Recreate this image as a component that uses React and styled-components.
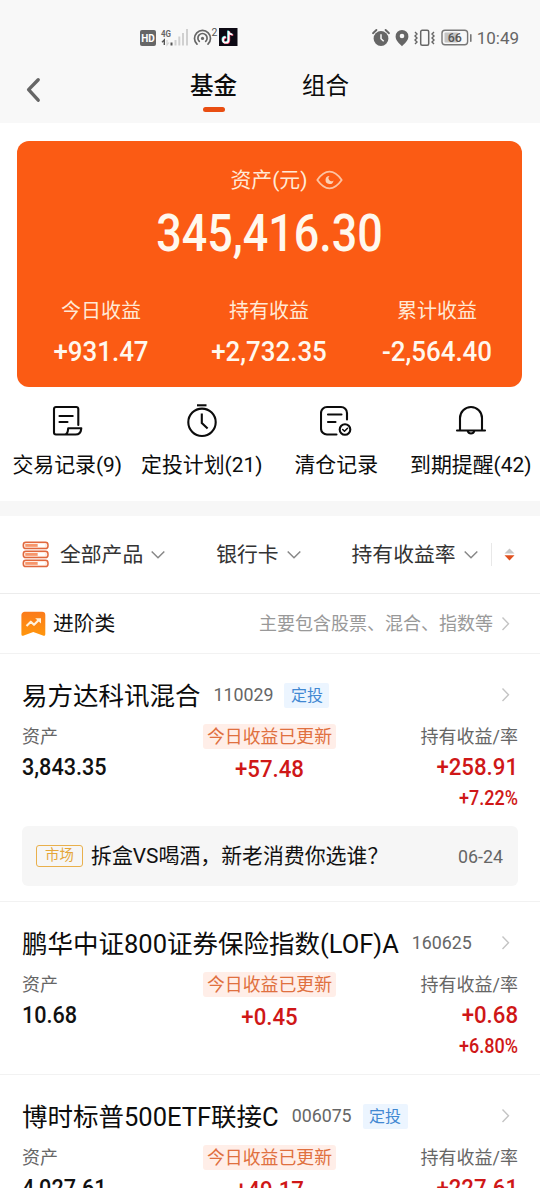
import React from "react";
import styled, { createGlobalStyle } from "styled-components";

const GlobalStyle = createGlobalStyle`
  * {
    box-sizing: border-box;
  }

  body {
    margin: 0;
    background-color: #fff;
    font-family: Roboto, "Noto Sans CJK SC", sans-serif;
    color: #111;
  }

  svg {
    display: block;
    flex-shrink: 0;
  }
`;

const Page = styled.div`
  width: 540px;
  height: 1188px;
  overflow: hidden;
  background-color: #fff;
  white-space: nowrap;
`;

const Header = styled.header`
  height: 123px;
  background-color: #f8f8f8;
`;

const StatusBar = styled.div`
  display: flex;
  align-items: center;
  height: 60px;
  padding: 16px 21px 0 139px;
  color: #666;
`;

const Clock = styled.span`
  margin-left: 5px;
  font-size: 17px;
  line-height: 20px;
`;

const Spacer = styled.div`
  flex: 1;
`;

const Nav = styled.nav`
  display: flex;
  height: 63px;
  padding-left: 24px;
`;

const BackButton = styled.div`
  width: 166px;
  padding-top: 16px;
`;

const Tab = styled.div`
  width: 47px;
  margin-right: 65px;
  font-size: 23.6px;
  font-weight: ${(props) => (props.$active ? 500 : 400)};
  line-height: 34px;
  padding-top: 9px;
  color: #0c0c0c;

  &::after {
    content: "";
    display: ${(props) => (props.$active ? "block" : "none")};
    width: 22px;
    height: 5px;
    margin: 4px auto 0;
    border-radius: 3px;
    background-color: #e94e12;
  }
`;

const AssetCard = styled.section`
  height: 246px;
  margin: 18px 18px 0 17px;
  padding-top: 24px;
  border-radius: 12px;
  background-color: #fb5b14;
  color: #fff8ee;
`;

const CardTitle = styled.div`
  display: flex;
  align-items: center;
  justify-content: center;
  gap: 8px;
  padding-left: 34px;
  font-size: 20.9px;
  line-height: 30px;
  color: #ffe9d6;
`;

const Figure = styled.div`
  font-size: ${(props) => props.$size}px;
  font-weight: 500;
  line-height: ${(props) => props.$line}px;
  transform: scaleX(${(props) => props.$squeeze || 0.925});
  transform-origin: ${(props) => props.$origin || "center"};
`;

const Total = styled(Figure)`
  margin-top: 9px;
  text-align: center;
`;

const Stats = styled.div`
  display: grid;
  grid-template-columns: repeat(3, 168px);
  margin-top: 32px;
  text-align: center;
`;

const StatLabel = styled.div`
  margin-bottom: 10px;
  font-size: 20px;
  line-height: 30px;
  color: #ffe9d6;
`;

const Actions = styled.section`
  display: grid;
  grid-template-columns: repeat(4, 134.5px);
  height: 114px;
  padding-top: 17px;
`;

const Action = styled.div`
  display: flex;
  flex-direction: column;
  align-items: center;
  gap: 12px;
  font-size: 20.9px;
  line-height: 30px;
  color: #0c0c0c;
`;

const Band = styled.div`
  height: 15px;
  background-color: #f7f7f7;
`;

const Filters = styled.section`
  display: flex;
  align-items: center;
  height: 78px;
  padding-left: 22px;
  border-bottom: 1px solid #ececec;
  font-size: 20.8px;
  line-height: 30px;
  color: #333;
`;

const Filter = styled.div`
  display: flex;
  align-items: center;
  gap: 8px;
  margin-left: ${(props) => props.$left}px;
  padding-top: 1px;
`;

const Divider = styled.div`
  width: 1px;
  height: 23px;
  margin: 0 12px 0 13px;
  background-color: #e8e8e8;
`;

const Category = styled.section`
  display: flex;
  align-items: center;
  height: 60px;
  padding: 0 30px 0 21px;
  border-bottom: 1px solid #f2f2f2;
`;

const CategoryName = styled.div`
  flex: 1;
  margin-left: 7px;
  font-size: 20.8px;
  line-height: 30px;
`;

const CategoryHint = styled.div`
  margin-right: 8px;
  font-size: 18px;
  line-height: 30px;
  color: #999;
`;

const Fund = styled.article`
  padding: 24px 22px 15px;
  border-bottom: 1px solid #f2f2f2;
`;

const FundHead = styled.div`
  display: flex;
  align-items: center;
  height: 34px;
  padding-right: 8px;
`;

const FundName = styled.div`
  padding-top: 1px;
  font-size: 25.5px;
  line-height: 34px;
  color: #0c0c0c;
`;

const FundCode = styled.div`
  margin-left: 13px;
  font-size: 17.8px;
  line-height: 34px;
  color: #666;
`;

const PlanTag = styled.div`
  width: 45px;
  height: 25px;
  margin-left: 11px;
  border-radius: 2px;
  background-color: #ecf5ff;
  font-size: 16px;
  line-height: 25px;
  text-align: center;
  color: #4188d2;
`;

const FundGrid = styled.div`
  display: grid;
  grid-template-columns: 181px 133px 1fr;
  height: 99px;
  padding-top: 12px;
`;

const Cell = styled.div`
  text-align: ${(props) => props.$align || "left"};
  color: ${(props) => (props.$gain ? "#cf1717" : "#111")};
`;

const CellLabel = styled.div`
  margin-bottom: 4px;
  font-size: 18px;
  line-height: 26px;
  color: #666;
`;

const UpdatedTag = styled.div`
  height: 25px;
  margin-bottom: 7px;
  border-radius: 3px;
  background-color: #ffeee8;
  font-size: 17.9px;
  line-height: 26px;
  color: #e0703f;
`;

const News = styled.div`
  display: flex;
  align-items: center;
  height: 60px;
  margin-top: 15px;
  padding: 0 15px 0 14px;
  border-radius: 6px;
  background-color: #f6f6f6;
`;

const NewsTag = styled.div`
  width: 47px;
  height: 22px;
  border: 1px solid #e9b04c;
  border-radius: 3px;
  font-size: 14.4px;
  line-height: 20px;
  text-align: center;
  color: #e5a63a;
`;

const NewsTitle = styled.div`
  flex: 1;
  margin-left: 8px;
  font-size: 20.9px;
  line-height: 30px;
`;

const NewsDate = styled.div`
  font-size: 17.8px;
  color: #666;
`;

const SignalIcons = () => (
  <svg width="100" height="22" viewBox="0 0 100 22">
    <rect x="1" y="3" width="16" height="16" rx="2" fill="#666" />
    <text
      x="9"
      y="14.8"
      fontSize="10"
      fontWeight="700"
      textAnchor="middle"
      fill="#fff"
    >
      HD
    </text>
    <text
      x="22"
      y="9.5"
      fontSize="9.8"
      fontWeight="700"
      textLength="10"
      lengthAdjust="spacingAndGlyphs"
      fill="#666"
    >
      4G
    </text>
    <path d="M25.3 18V13L23 15.2" fill="none" stroke="#555" strokeWidth="1.4" />
    <path d="M28 13v5l2-2.5" fill="none" stroke="#d2d2d2" strokeWidth="1.2" />
    <rect x="31.5" y="15.5" width="2" height="3" fill="#555" />
    <g fill="#d0d0d0">
      <rect x="35.5" y="13" width="2" height="5.5" />
      <rect x="39.3" y="9.5" width="2" height="9" />
      <rect x="43" y="6" width="2" height="12.5" />
      <rect x="47" y="2" width="2" height="16.5" />
    </g>
    <g fill="none" stroke="#666" strokeWidth="1.7" strokeLinecap="round">
      <path d="M58 17.2a8 8 0 1 1 11 0" />
      <path d="M60.3 14.4a4.6 4.6 0 1 1 6.4 0" />
    </g>
    <circle cx="63.5" cy="11.4" r="1.6" fill="#666" />
    <text x="72.4" y="9" fontSize="10.5" fill="#555">
      2
    </text>
    <rect x="80" y="1" width="18.5" height="18" fill="#0d0a14" />
    <g fill="none" strokeWidth="1.8">
      <path
        d="M89.6 4v8.9a2.8 2.8 0 1 1-2.8-2.8M89.6 4c.2 2 1.6 3.4 4 3.6"
        stroke="#4fd9d8"
        transform="translate(-.6 -.4)"
      />
      <path
        d="M89.6 4v8.9a2.8 2.8 0 1 1-2.8-2.8M89.6 4c.2 2 1.6 3.4 4 3.6"
        stroke="#e8395b"
        transform="translate(.7 .5)"
      />
      <path
        d="M89.6 4v8.9a2.8 2.8 0 1 1-2.8-2.8M89.6 4c.2 2 1.6 3.4 4 3.6"
        stroke="#fff"
      />
    </g>
  </svg>
);

const DeviceIcons = () => (
  <svg width="101" height="22" viewBox="0 0 101 22">
    <circle cx="10" cy="11.5" r="7.4" fill="#666" />
    <path
      d="M10 7.3v4.4l2.7 2.5"
      fill="none"
      stroke="#f8f8f8"
      strokeWidth="1.5"
    />
    <path
      d="M2 6.2 5.4 3M14.6 3 18 6.2"
      stroke="#666"
      strokeWidth="1.9"
      strokeLinecap="round"
    />
    <path
      d="M31 3a6.4 6.4 0 0 1 6.4 6.4c0 4.2-4.1 7.3-6.4 9.8-2.3-2.5-6.4-5.6-6.4-9.8A6.4 6.4 0 0 1 31 3z"
      fill="#666"
    />
    <circle cx="31" cy="9" r="2.3" fill="#f8f8f8" />
    <rect
      x="49.7"
      y="3.3"
      width="8"
      height="15"
      rx="1.5"
      fill="none"
      stroke="#666"
      strokeWidth="1.5"
    />
    <path
      d="m44 5 2 2-2 2 2 2-2 2 2 2-2 2M63 5l-2 2 2 2-2 2 2 2-2 2 2 2"
      fill="none"
      stroke="#666"
      strokeWidth="1.4"
    />
    <rect
      x="71"
      y="3.3"
      width="25.6"
      height="14.5"
      rx="3"
      fill="none"
      stroke="#777"
      strokeWidth="1.4"
    />
    <rect x="73.5" y="5.6" width="13.5" height="10" rx="1" fill="#c4c4c4" />
    <rect x="99" y="7" width="1.6" height="8" rx=".8" fill="#777" />
    <text
      x="83.8"
      y="15"
      fontSize="12.4"
      fontWeight="500"
      textAnchor="middle"
      fill="#555"
    >
      66
    </text>
  </svg>
);

const BackIcon = () => (
  <svg width="20" height="28" viewBox="0 0 20 28">
    <path
      d="M14.2 3.8 4.6 13.6l9.6 10.6"
      fill="none"
      stroke="#666"
      strokeWidth="3.4"
      strokeLinecap="round"
      strokeLinejoin="round"
    />
  </svg>
);

const EyeIcon = () => (
  <svg width="27" height="20" viewBox="0 0 27 20">
    <path
      d="M1.3 10C5.5 4 9.3 1.7 13.5 1.7S21.5 4 25.7 10C21.5 16 17.7 18.3 13.5 18.3S5.5 16 1.3 10z"
      fill="none"
      stroke="#fcc3a3"
      strokeWidth="1.8"
      strokeLinejoin="round"
    />
    <path
      d="M13.6 6a4 4 0 1 0 3.9 4.4 2.7 2.7 0 0 1-3.9-4.4z"
      fill="#fcd0b5"
    />
  </svg>
);

const RecordIcon = () => (
  <svg width="32" height="34" viewBox="0 0 32 34">
    <g
      fill="none"
      stroke="#0c0c0c"
      strokeWidth="2.1"
      strokeLinecap="round"
      strokeLinejoin="round"
    >
      <path d="M27.3 21V5a2 2 0 0 0-2-2H5a2 2 0 0 0-2 2v23.5a2 2 0 0 0 2 2h19.500c3.200 0 5.500-2.500 5.800-6.200H17.200c-.3 3.800-1 6.200-3.700 6.200" />
      <path d="M8.5 12h13.2M8.5 18h8" />
    </g>
  </svg>
);

const TimerIcon = () => (
  <svg width="32" height="34" viewBox="0 0 32 34">
    <g fill="none" stroke="#0c0c0c" strokeWidth="2.1">
      <circle cx="16" cy="18.3" r="13.7" />
      <path d="M11 1.3h9.5" />
      <path d="M15.8 9.5V19l5.8 5.5" />
    </g>
  </svg>
);

const ClearedIcon = () => (
  <svg width="32" height="34" viewBox="0 0 32 34">
    <g
      fill="none"
      stroke="#0c0c0c"
      strokeWidth="2.1"
      strokeLinecap="round"
      strokeLinejoin="round"
    >
      <path d="M27 15.500V9a6 6 0 0 0-6-6H7a6 6 0 0 0-6 6v15.500a6 6 0 0 0 6 6h9.500" />
      <path d="M8 10.500h13.500M8 18h7.500" />
      <circle cx="25" cy="25.500" r="5.300" />
      <path d="m22.700 25.500 1.800 1.700 3-3" strokeWidth="1.500" />
    </g>
  </svg>
);

const BellIcon = () => (
  <svg width="32" height="34" viewBox="0 0 32 34">
    <g fill="none" stroke="#0c0c0c" strokeWidth="2.1" strokeLinecap="round">
      <path d="M5 26V14a11 11 0 0 1 22 0v12" />
      <path d="M2 26.500h28" />
      <path d="M12.800 27a3.300 3.300 0 0 0 6.400 0" />
    </g>
  </svg>
);

const StackIcon = () => (
  <svg width="27" height="27" viewBox="0 0 27 27">
    {[1, 10, 19].map((y) => (
      <g key={y}>
        <rect
          x="1.3"
          y={y + 0.3}
          width="24.7"
          height="6.2"
          rx="2.6"
          fill="#ffece2"
          stroke="#e0683e"
          strokeWidth="1.5"
        />
        <rect x="3.3" y={y + 2} width="12.5" height="2.8" fill="#f7966c" />
        <rect x="15.8" y={y + 2} width="7" height="2.8" fill="#fff" />
      </g>
    ))}
  </svg>
);

const TrendIcon = () => (
  <svg width="25" height="26" viewBox="0 0 25 26">
    <defs>
      <linearGradient id="trend" x1="0" y1="0" x2="0" y2="1">
        <stop offset="0" stopColor="#fb7b1c" />
        <stop offset="1" stopColor="#ff960c" />
      </linearGradient>
    </defs>
    <path
      d="M4 .8h17a3.300 3.300 0 0 1 3.300 3.300V23c0 1.600-1 2.300-2.400 1.600L12.300 21l-9.500 3.600C1.400 25.300.4 24.600.4 23V4.100A3.300 3.300 0 0 1 4 .8z"
      fill="url(#trend)"
    />
    <path
      d="m5.500 15 4.300-4.300 3.200 3.100 4.500-4.600"
      fill="none"
      stroke="#fff2dc"
      strokeWidth="2.1"
      strokeLinejoin="round"
    />
    <path d="M14.200 7.300h5.800v5.300z" fill="#fff2dc" />
  </svg>
);

const ChevronDown = () => (
  <svg width="14" height="10" viewBox="0 0 14 10">
    <path
      d="m.7 1.500 6.300 6.300 6.300-6.300"
      fill="none"
      stroke="#888"
      strokeWidth="1.5"
    />
  </svg>
);

const ChevronRight = () => (
  <svg width="9" height="14" viewBox="0 0 9 14">
    <path
      d="m1.500.5 6 6.200-6 6.200"
      fill="none"
      stroke="#c4c4c4"
      strokeWidth="1.4"
    />
  </svg>
);

const SortIcon = () => (
  <svg width="11" height="14" viewBox="0 0 11 14">
    <path d="M5.500.5 10.500 5.500H.5z" fill="#c6c6c6" />
    <path d="M5.500 12.500 10.500 7.200H.5z" fill="#e0501e" />
  </svg>
);

const stats = [
  { label: "今日收益", value: "+931.47" },
  { label: "持有收益", value: "+2,732.35" },
  { label: "累计收益", value: "-2,564.40" },
];

const actions = [
  { label: "交易记录(9)", Icon: RecordIcon },
  { label: "定投计划(21)", Icon: TimerIcon },
  { label: "清仓记录", Icon: ClearedIcon },
  { label: "到期提醒(42)", Icon: BellIcon },
];

const funds = [
  {
    name: "易方达科讯混合",
    code: "110029",
    plan: true,
    asset: "3,843.35",
    today: "+57.48",
    held: "+258.91",
    rate: "+7.22%",
    news: { tag: "市场", title: "拆盒VS喝酒，新老消费你选谁？", date: "06-24" },
  },
  {
    name: "鹏华中证800证券保险指数(LOF)A",
    code: "160625",
    asset: "10.68",
    today: "+0.45",
    held: "+0.68",
    rate: "+6.80%",
  },
  {
    name: "博时标普500ETF联接C",
    code: "006075",
    plan: true,
    asset: "4,027.61",
    today: "+49.17",
    held: "+227.61",
  },
];

const FundItem = ({ fund }) => (
  <Fund>
    <FundHead>
      <FundName>{fund.name}</FundName>
      <FundCode>{fund.code}</FundCode>
      {fund.plan && <PlanTag>定投</PlanTag>}
      <Spacer />
      <ChevronRight />
    </FundHead>
    <FundGrid>
      <Cell>
        <CellLabel>资产</CellLabel>
        <Figure $size={24} $line={26} $origin="left" $squeeze={0.9}>
          {fund.asset}
        </Figure>
      </Cell>
      <Cell $align="center" $gain>
        <UpdatedTag>今日收益已更新</UpdatedTag>
        <Figure $size={24} $line={26}>
          {fund.today}
        </Figure>
      </Cell>
      <Cell $align="right" $gain>
        <CellLabel>持有收益/率</CellLabel>
        <Figure $size={24} $line={26} $origin="right">
          {fund.held}
        </Figure>
        {fund.rate && (
          <Figure $size={19.5} $line={37} $origin="right">
            {fund.rate}
          </Figure>
        )}
      </Cell>
    </FundGrid>
    {fund.news && (
      <News>
        <NewsTag>{fund.news.tag}</NewsTag>
        <NewsTitle>{fund.news.title}</NewsTitle>
        <NewsDate>{fund.news.date}</NewsDate>
      </News>
    )}
  </Fund>
);

const App = () => {
  return (
    <Page lang="zh-CN">
      <GlobalStyle />
      <Header>
        <StatusBar>
          <SignalIcons />
          <Spacer />
          <DeviceIcons />
          <Clock>10:49</Clock>
        </StatusBar>
        <Nav>
          <BackButton>
            <BackIcon />
          </BackButton>
          <Tab $active>基金</Tab>
          <Tab>组合</Tab>
        </Nav>
      </Header>

      <AssetCard>
        <CardTitle>
          资产(元)
          <EyeIcon />
        </CardTitle>
        <Total $size={51} $line={60} $squeeze={0.88}>
          345,416.30
        </Total>
        <Stats>
          {stats.map((stat) => (
            <div key={stat.label}>
              <StatLabel>{stat.label}</StatLabel>
              <Figure $size={28} $line={32}>
                {stat.value}
              </Figure>
            </div>
          ))}
        </Stats>
      </AssetCard>

      <Actions>
        {actions.map(({ label, Icon }) => (
          <Action key={label}>
            <Icon />
            {label}
          </Action>
        ))}
      </Actions>
      <Band />

      <Filters>
        <StackIcon />
        <Filter $left={11}>
          全部产品
          <ChevronDown />
        </Filter>
        <Filter $left={51}>
          银行卡
          <ChevronDown />
        </Filter>
        <Filter $left={51}>
          持有收益率
          <ChevronDown />
        </Filter>
        <Divider />
        <SortIcon />
      </Filters>

      <Category>
        <TrendIcon />
        <CategoryName>进阶类</CategoryName>
        <CategoryHint>主要包含股票、混合、指数等</CategoryHint>
        <ChevronRight />
      </Category>

      {funds.map((fund) => (
        <FundItem key={fund.code} fund={fund} />
      ))}
    </Page>
  );
};

export default App;
